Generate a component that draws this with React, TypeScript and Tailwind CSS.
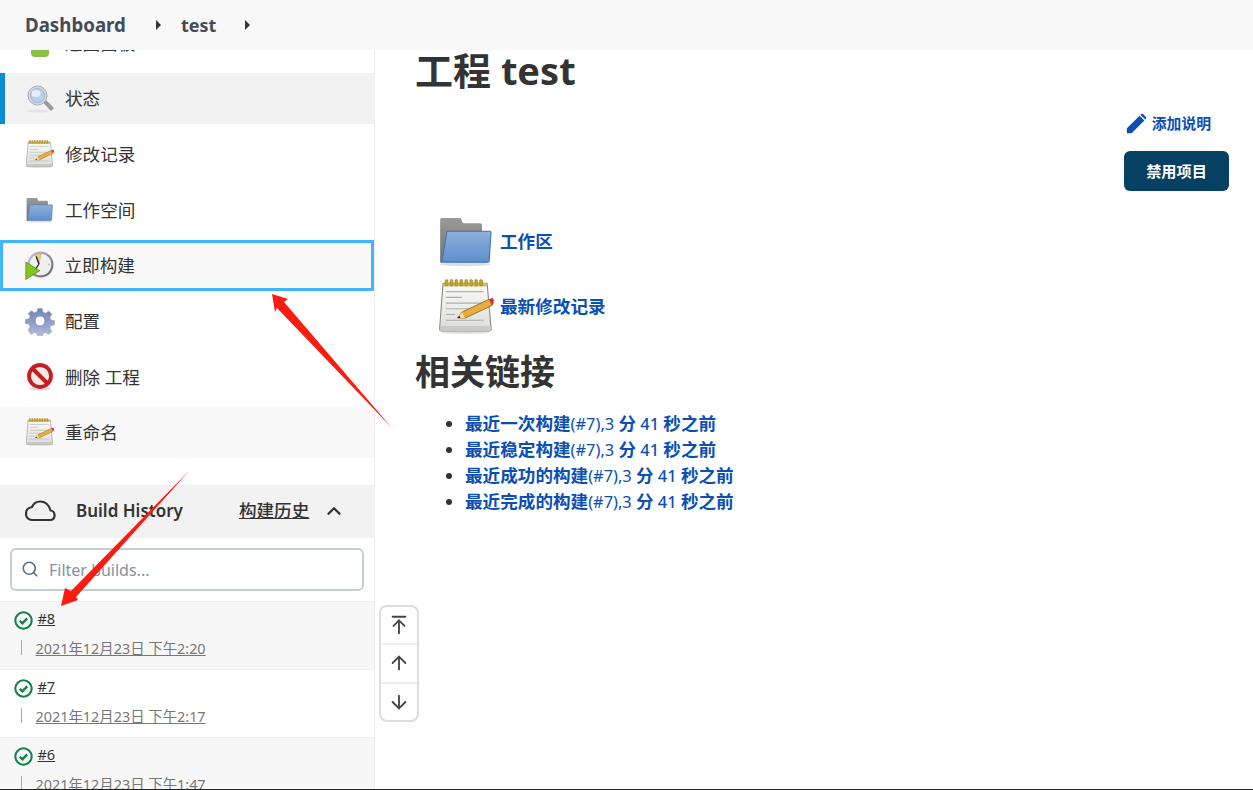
import { ArrowDown, ArrowUp, ArrowUpToLine, ChevronUp, Search } from 'lucide-react';

function NotepadIcon({ size, id }: { size: number; id: string }) {
  return (
    <svg width={size} height={size} viewBox="0 0 48 48" className="flex-shrink-0">
      <defs>
        <linearGradient id={id} x1="0" y1="0" x2="0" y2="1">
          <stop offset="0" stopColor="#fbfbf8" />
          <stop offset="1" stopColor="#dcdcda" />
        </linearGradient>
      </defs>
      <ellipse cx="23" cy="46.500" rx="21" ry="1.400" fill="#e2e2e2" />
      <path d="M3.500 4h38.500l3.500 39.500a1.500 1.500 0 0 1-1.500 1.800H2a1.500 1.500 0 0 1-1.500-1.800z" fill={`url(#${id})`} stroke="#85857f" strokeWidth="0.900" />
      <path d="M.8 41h44.400l.3 2.500a1.500 1.500 0 0 1-1.500 1.800H2a1.500 1.500 0 0 1-1.500-1.800z" fill="#c9c9c5" />
      <rect x="4" y="3" width="37.500" height="3.500" fill="#cdbb66" />
      {[6.500, 10.800, 15.100, 19.400, 23.700, 28, 32.300, 36.600].map((x) => (
        <rect key={x} x={x - 1.100} y="0.500" width="2.400" height="5.500" rx="1.100" fill="#c9a92c" stroke="#7a6512" strokeWidth="0.400" />
      ))}
      <path d="M6 11h33M6 16h14M6 21h33M6 26h22M6 31h8M6 36h33" stroke="#b0b0ac" strokeWidth="1" />
      <path d="M16 34l4.100-5.200 23.600-11.100 2.600 5.400-23.600 11.100z" fill="#e8ad3d" stroke="#76510f" strokeWidth="0.600" />
      <path d="M16 34l4.100-5.200 2.600 5.400z" fill="#f0dcb0" />
      <path d="M16 34l1.700-2.100 1 2.200z" fill="#3e2a06" />
      <path d="M43.700 17.700l2.200-1c2.300-.6 2.600 4.300.4 6.400z" fill="#e22c2c" />
    </svg>
  );
}

function FolderIcon({ size, id }: { size: number; id: string }) {
  return (
    <svg width={size} height={size} viewBox="0 0 48 48" className="flex-shrink-0">
      <defs>
        <linearGradient id={id} x1="0" y1="0" x2="0" y2="1">
          <stop offset="0" stopColor="#8db1dc" />
          <stop offset="1" stopColor="#5f8ecb" />
        </linearGradient>
        <linearGradient id={`${id}-back`} x1="0" y1="0" x2="0" y2="1">
          <stop offset="0" stopColor="#9a9a9a" />
          <stop offset="1" stopColor="#6f6f6f" />
        </linearGradient>
      </defs>
      <ellipse cx="23" cy="44" rx="22" ry="1.600" fill="#dedede" />
      <path d="M1 5a1.500 1.500 0 0 1 1.500-1.500H19l2 4.500h15a1.500 1.500 0 0 1 1.500 1.500V16H7L3 43H2.500A1.500 1.500 0 0 1 1 41.500z" fill={`url(#${id}-back)`} />
      <path d="M7 15h37.400a1 1 0 0 1 1 1.100l-1.600 25a1 1 0 0 1-1 .9H3.600a1 1 0 0 1-1-1.100z" fill={`url(#${id})`} stroke="#3f71b2" strokeWidth="0.900" />
    </svg>
  );
}

function MagnifierIcon() {
  return (
    <svg width={28} height={28} viewBox="0 0 28 28" className="flex-shrink-0">
      <ellipse cx="12" cy="26" rx="11" ry="1.600" fill="#e4e4e4" />
      <path d="M17.500 17.500l3-1.500 6.500 6.500c.8 1-1.500 3.300-2.600 2.500z" fill="#9a9a9a" stroke="#777" strokeWidth="0.600" />
      <circle cx="11.500" cy="10.500" r="9.500" fill="#d4d8dc" stroke="#a9aeb3" strokeWidth="1" />
      <circle cx="11.500" cy="10.500" r="7" fill="#b9d1ee" stroke="#8aa8cc" strokeWidth="0.700" />
      <ellipse cx="10" cy="8.500" rx="4.500" ry="3.500" fill="#e4eefa" />
    </svg>
  );
}

function ClockPlayIcon() {
  return (
    <svg width={30} height={30} viewBox="0 0 30 30" className="flex-shrink-0">
      <defs>
        <linearGradient id="clock-ring" x1="0" y1="0" x2="1" y2="1">
          <stop offset="0" stopColor="#c9c7d4" />
          <stop offset="1" stopColor="#5f5a78" />
        </linearGradient>
      </defs>
      <circle cx="15.500" cy="14.500" r="13" fill="url(#clock-ring)" />
      <circle cx="15.500" cy="14.500" r="10.800" fill="#f0f0f0" />
      <path d="M14 14L10 5a10.800 10.800 0 0 1 6-1.300z" fill="#e6d28a" stroke="#b59b3c" strokeWidth="0.500" />
      <path d="M14 14l-2.800-7.500M14 14l-4 6" stroke="#1c1c1c" strokeWidth="1.300" />
      <circle cx="24" cy="14.500" r="1" fill="#bbb" />
      <path d="M.8 12l14 8.700L.8 29.500z" fill="#83c41f" stroke="#55860f" strokeWidth="0.700" />
    </svg>
  );
}

function GearIcon() {
  return (
    <svg width={30} height={30} viewBox="0 0 30 30" className="flex-shrink-0">
      <defs>
        <linearGradient id="gear" x1="0" y1="0" x2="0" y2="1">
          <stop offset="0" stopColor="#6d83b8" />
          <stop offset="1" stopColor="#b9bcd8" />
        </linearGradient>
      </defs>
      <path
        d="M12.500 1h5l.8 4 3 1.300 3.500-2.300 3.500 3.500-2.300 3.500 1.300 3 4 .8v4.400l-4 .8-1.300 3 2.300 3.500-3.500 3.500-3.500-2.300-3 1.300-.8 4h-5l-.8-4-3-1.300-3.500 2.300L1.700 25l2.300-3.500-1.300-3-4-.8v-4.400l4-.8 1.300-3L1.700 7l3.500-3.500 3.500 2.300 3-1.300z"
        transform="translate(1.500 1.500) scale(0.9)"
        fill="url(#gear)"
        stroke="#9a9fc0"
        strokeWidth="0.600"
      />
      <circle cx="15" cy="15" r="5" fill="#fff" stroke="#8e94b8" strokeWidth="1" />
    </svg>
  );
}

function NoEntryIcon() {
  return (
    <svg width={28} height={28} viewBox="0 0 28 28" className="flex-shrink-0">
      <ellipse cx="14" cy="26" rx="11" ry="1.600" fill="#ddd" />
      <circle cx="14" cy="13" r="11" fill="#eeeaea" stroke="#c41e1e" strokeWidth="3.800" />
      <path d="M6.500 5.500l15 15" stroke="#c41e1e" strokeWidth="4" />
    </svg>
  );
}

function CloudIcon() {
  return (
    <svg width={31} height={22} viewBox="0 0 31 22" fill="none" stroke="#333" strokeWidth="2.200" strokeLinejoin="round" className="flex-shrink-0">
      <path d="M7 20h18c6 0 6-9 .5-9.500C24 5 20 1.500 15 1.500c-3.500 0-6.500 2-8 5.500C3 7.500 1 10.500 1 13.500 1 17.500 3.500 20 7 20z" />
    </svg>
  );
}

function SuccessIcon() {
  return (
    <svg width={19} height={19} viewBox="0 0 19 19" fill="none" className="mt-[3px] flex-shrink-0">
      <circle cx="9.500" cy="9.500" r="8.200" stroke="#138347" strokeWidth="2.100" />
      <path d="M5.800 9.800l2.600 2.500 4.800-5" stroke="#138347" strokeWidth="2.400" />
    </svg>
  );
}

function PencilIcon() {
  return (
    <svg width={21} height={21} viewBox="0 0 24 24" fill="#0b4fb3" className="flex-shrink-0">
      <path d="M1 23v-5.500L15.500 3l5.500 5.500L6.500 23zM17 1.500c.8-.8 2-.8 2.800 0l2.700 2.700c.8.800.8 2 0 2.800L22 7.500 16.500 2z" />
    </svg>
  );
}

const sideItems = [
  { label: '返回面板', icon: <div className="w-[28px] h-[28px] flex items-end justify-center"><div className="w-[18px] h-[20px] bg-[#8cc04b] rounded-sm" /></div> },
  { label: '状态', icon: <MagnifierIcon />, active: true },
  { label: '修改记录', icon: <NotepadIcon size={28} id="note-a" /> },
  { label: '工作空间', icon: <FolderIcon size={28} id="folder-a" /> },
  { label: '立即构建', icon: <ClockPlayIcon />, focused: true },
  { label: '配置', icon: <GearIcon /> },
  { label: '删除 工程', icon: <NoEntryIcon /> },
  { label: '重命名', icon: <NotepadIcon size={28} id="note-b" />, hovered: true },
];

const builds = [
  { no: '#8', date: '2021年12月23日 下午2:20', alt: true },
  { no: '#7', date: '2021年12月23日 下午2:17', alt: false },
  { no: '#6', date: '2021年12月23日 下午1:47', alt: true },
];

const permalinks = [
  '最近一次构建',
  '最近稳定构建',
  '最近成功的构建',
  '最近完成的构建',
];

export default function App() {
  return (
    <div className="relative h-[790px] w-[1253px] overflow-hidden border-b border-[#222] bg-white text-[#333] [font-family:'Noto_Sans','Noto_Sans_CJK_SC',sans-serif]">
      {/* Breadcrumb */}
      <div className="relative z-10 flex h-[50px] items-center bg-[#f8f8f8] pl-[25px]">
        <span className="text-[18.7px] leading-none font-bold text-[#444b57]">Dashboard</span>
        <span className="ml-[30px] h-0 w-0 border-y-[5px] border-l-[5px] border-y-transparent border-l-[#333]" />
        <span className="ml-[20px] text-[18px] leading-none font-bold text-[#444b57]">test</span>
        <span className="ml-[29px] h-0 w-0 border-y-[5px] border-l-[5px] border-y-transparent border-l-[#333]" />
      </div>

      <div className="flex h-[739px]">
        {/* Sidebar */}
        <div className="w-[375px] flex-shrink-0 border-r border-[#f0f0f0]">
          <div className="-mt-[32.67px] flex flex-col gap-[4.67px]">
            {sideItems.map((item) => (
              <div
                key={item.label}
                className={
                  item.active
                    ? 'flex h-[51px] items-center border-l-[5px] border-[#0b8ad5] bg-[#f2f2f2] pl-[20px] text-[17.6px]'
                    : item.focused
                      ? 'flex h-[51px] items-center border-[3.500px] border-[#3fb5ff] bg-[#f8f8f8] pl-[21.500px] text-[17.6px]'
                      : item.hovered
                        ? 'flex h-[51px] items-center bg-[#f8f8f8] pl-[25px] text-[17.6px]'
                        : 'flex h-[51px] items-center pl-[25px] text-[17.6px]'
                }
              >
                <span className="flex w-[30px] justify-center">{item.icon}</span>
                <span className="ml-[10px]">{item.label}</span>
              </div>
            ))}
          </div>

          {/* Build history */}
          <div className="mt-[27px] flex h-[53px] items-center bg-[#f2f2f2] pl-[25px]">
            <CloudIcon />
            <span className="mb-[2px] ml-[20px] text-[17px] font-semibold">Build History</span>
            <span className="mb-[2px] ml-[56px] text-[17.6px] font-medium underline">构建历史</span>
            <ChevronUp size={22} strokeWidth={2.500} className="ml-[14px]" />
          </div>
          <div className="p-[10px]">
            <div className="flex h-[43px] items-center rounded-md border-2 border-[#c4ced3] pl-[9px]">
              <Search size={18} strokeWidth={2.200} className="text-[#5a7386]" />
              <input
                placeholder="Filter builds..."
                className="ml-[10px] w-[280px] bg-transparent pt-[2px] text-[16px] outline-none placeholder:text-[#8193a0]"
              />
            </div>
          </div>
          {builds.map((b) => (
            <div
              key={b.no}
              className={
                b.alt
                  ? 'h-[68px] border-t border-[#f0f0f0] bg-[#f7f7f7] pl-[13.500px] pt-[7px]'
                  : 'h-[68px] border-t border-[#f0f0f0] bg-white pl-[13.500px] pt-[7px]'
              }
            >
              <div className="flex h-[20px] items-center">
                <SuccessIcon />
                <span className="ml-[5px] text-[14.500px] underline">{b.no}</span>
              </div>
              <div className="mt-[8px] flex h-[22px] items-center pl-[7px]">
                <span className="h-[15px] w-px bg-[#aaa]" />
                <span className="mt-[1px] ml-[14px] text-[14.400px] whitespace-nowrap text-[#777] underline">{b.date}</span>
              </div>
            </div>
          ))}
        </div>

        {/* Main */}
        <div className="flex-1 pl-[40px]">
          <h1 className="text-[38px] leading-[40px] font-bold">工程 test</h1>
          <div className="mt-[23px] flex h-[20px] items-center justify-end pr-[42px]">
            <PencilIcon />
            <span className="ml-[5px] text-[14.800px] font-semibold text-[#0b4fb3]">添加说明</span>
          </div>
          <div className="mt-[18px] flex justify-end pr-[24px]">
            <button className="h-[40px] w-[105px] rounded-md bg-[#064063] text-[15.200px] font-semibold text-white">
              禁用项目
            </button>
          </div>
          <div className="mt-[22px] ml-[24px] flex h-[56px] items-center">
            <FolderIcon size={55} id="folder-b" />
            <a className="ml-[6px] text-[17.6px] font-bold text-[#0b4fb3]">工作区</a>
          </div>
          <div className="mt-[9px] ml-[24px] flex h-[56px] items-center">
            <NotepadIcon size={55} id="note-c" />
            <a className="ml-[6px] text-[17.6px] font-bold text-[#0b4fb3]">最新修改记录</a>
          </div>
          <h2 className="mt-[18px] text-[35px] leading-[40px] font-bold">相关链接</h2>
          <ul className="mt-[18px] list-disc pl-[50px] text-[17.6px] leading-[26px]">
            {permalinks.map((p) => (
              <li key={p} className="h-[26px]">
                <a className="text-[#0b4fb3]">
                  <span className="font-semibold">{p}</span>
                  <span className="text-[16.4px]">(#7),3 </span>
                  <span className="font-semibold">分</span>
                  <span className="text-[16.4px] font-medium"> 41 </span>
                  <span className="font-semibold">秒之前</span>
                </a>
              </li>
            ))}
          </ul>
        </div>
      </div>

      {/* Scroll widget */}
      <div className="absolute top-[605px] left-[379px] flex h-[117px] w-[40px] flex-col rounded-lg border-2 border-[#d9dfe1] bg-white text-[#444]">
        <div className="flex h-[38px] items-center justify-center border-b-2 border-[#f0f0f0]">
          <ArrowUpToLine size={22} strokeWidth={2} />
        </div>
        <div className="flex h-[39px] items-center justify-center border-b-2 border-[#f0f0f0] pb-[2px]">
          <ArrowUp size={22} strokeWidth={2} />
        </div>
        <div className="flex h-[36px] items-center justify-center">
          <ArrowDown size={22} strokeWidth={2} />
        </div>
      </div>

      {/* Annotation arrows */}
      <svg width="1253" height="790" viewBox="0 0 1253 790" className="pointer-events-none absolute top-0 left-0 z-20">
        <polygon points="272,294 288,299 284,302 392,428 277,308 275,312" fill="#fb1c10" />
        <polygon points="61,606 65,588 71,591 190,470 76,597 78,600" fill="#fb1c10" />
      </svg>
    </div>
  );
}
